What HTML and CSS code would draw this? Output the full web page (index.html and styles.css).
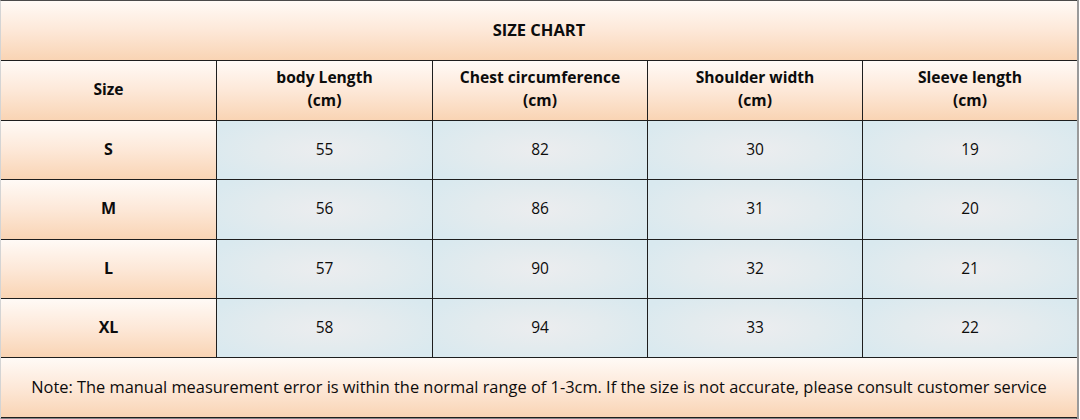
FILE: index.html
```html
<!DOCTYPE html>
<html>
<head>
<meta charset="utf-8">
<link rel="stylesheet" href="styles.css">
</head>
<body>
<div class="chart">
  <div class="cell peach title span">SIZE CHART</div>
  <div class="cell peach head">Size</div>
  <div class="cell peach head">body Length<br>(cm)</div>
  <div class="cell peach head">Chest circumference<br>(cm)</div>
  <div class="cell peach head">Shoulder width<br>(cm)</div>
  <div class="cell peach head">Sleeve length<br>(cm)</div>

  <div class="cell peach size">S</div>
  <div class="cell blue">55</div><div class="cell blue">82</div><div class="cell blue">30</div><div class="cell blue">19</div>
  <div class="cell peach size">M</div>
  <div class="cell blue">56</div><div class="cell blue">86</div><div class="cell blue">31</div><div class="cell blue">20</div>
  <div class="cell peach size">L</div>
  <div class="cell blue">57</div><div class="cell blue">90</div><div class="cell blue">32</div><div class="cell blue">21</div>
  <div class="cell peach size">XL</div>
  <div class="cell blue">58</div><div class="cell blue">94</div><div class="cell blue">33</div><div class="cell blue">22</div>

  <div class="cell peach note span">Note: The manual measurement error is within the normal range of 1-3cm. If the size is not accurate, please consult customer service</div>
</div>
</body>
</html>
```
FILE: styles.css
```css
html, body {
  margin: 0;
  padding: 0;
  background: #ffffff;
}
.chart {
  width: 1077px;
  height: 419px;
  box-sizing: border-box;
  display: grid;
  grid-template-columns: 215px 215px 214px 214px 214px;
  grid-template-rows: 59px 59px 58px 59px 58px 58px 59px;
  gap: 1px;
  background: #1e1e1e;
  border-top: 1px solid #4a4a4a;
  border-left: 1px solid #d4d4d4;
  border-right: 1px solid #2a2a2a;
  border-bottom: 1px solid #888;
  font-family: "Open Sans", "Noto Sans", sans-serif;
  color: #0c0c0c;
  box-shadow: 2px 0 0 #9a9a9a;
}
.cell {
  display: flex;
  align-items: center;
  justify-content: center;
  text-align: center;
  padding-bottom: 3px;
  box-sizing: border-box;
}
.span {
  grid-column: 1 / -1;
}
.peach {
  background: linear-gradient(to bottom, #fffaf6 0%, #fde8d8 50%, #f9d4b4 100%);
}
.blue {
  background: radial-gradient(ellipse 60% 70% at center, #ecedef 0%, #e3ebee 50%, #d9e9ef 100%);
  font-size: 15.5px;
}
.title {
  font-weight: 700;
  font-size: 16.5px;
}
.head {
  font-weight: 700;
  font-size: 15.6px;
  line-height: 23px;
}
.size {
  font-weight: 700;
  font-size: 16px;
}
.note {
  font-size: 16.4px;
}
```
